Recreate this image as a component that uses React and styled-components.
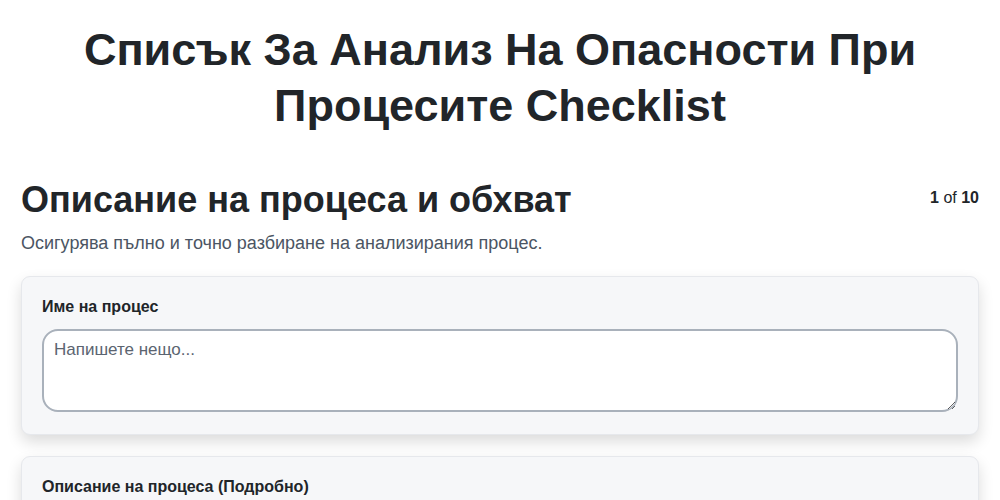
import React from "react";
import styled, { createGlobalStyle } from "styled-components";

const Global = createGlobalStyle`
  html, body { margin: 0; padding: 0; background: #ffffff; }
  body { font-family: "Liberation Sans", Arial, sans-serif; color: #212529; }
  * { box-sizing: border-box; }
`;

const Page = styled.div`
  padding: 0 21px;
`;

const Title = styled.h1`
  margin: 0;
  padding-top: 22px;
  text-align: center;
  font-size: 45px;
  line-height: 56px;
  font-weight: 700;
  color: #212529;
`;

const SectionHead = styled.div`
  display: flex;
  justify-content: space-between;
  align-items: flex-start;
  margin-top: 44px;
`;

const SectionTitle = styled.h2`
  margin: 0;
  font-size: 36px;
  line-height: 44px;
  font-weight: 700;
`;

const Counter = styled.div`
  font-size: 16px;
  padding-top: 11px;
  color: #212529;
  b { font-weight: 700; }
`;

const Subtitle = styled.p`
  margin: 11px 0 0;
  font-size: 18px;
  line-height: 21px;
  color: #4b5563;
`;

const Card = styled.div`
  margin-top: ${(p) => (p.$first ? 22 : 21)}px;
  background: #f6f7f9;
  border: 1px solid #e6e8ec;
  border-radius: 9px;
  padding: 21px 20px 22px;
  box-shadow: 0 7px 15px rgba(0, 0, 0, 0.14);
`;

const Label = styled.label`
  display: block;
  font-size: 16px;
  line-height: 18px;
  font-weight: 700;
  color: #212529;
  margin-bottom: 13px;
`;

const TextArea = styled.textarea`
  display: block;
  width: 100%;
  height: 83px;
  border: 2px solid #a9b1bb;
  border-radius: 16px;
  padding: 9px 10px;
  font-family: "Liberation Sans", Arial, sans-serif;
  font-size: 17px;
  color: #212529;
  background: #fff;
  &::placeholder { color: #5b6470; }
`;

export default function App() {
  return (
    <>
      <Global />
      <Page>
        <Title>Списък За Анализ На Опасности При Процесите Checklist</Title>
        <SectionHead>
          <SectionTitle>Описание на процеса и обхват</SectionTitle>
          <Counter>
            <b>1</b> of <b>10</b>
          </Counter>
        </SectionHead>
        <Subtitle>Осигурява пълно и точно разбиране на анализирания процес.</Subtitle>
        <Card $first>
          <Label>Име на процес</Label>
          <TextArea placeholder="Напишете нещо..." />
        </Card>
        <Card>
          <Label>Описание на процеса (Подробно)</Label>
          <TextArea placeholder="Напишете нещо..." />
        </Card>
      </Page>
    </>
  );
}
